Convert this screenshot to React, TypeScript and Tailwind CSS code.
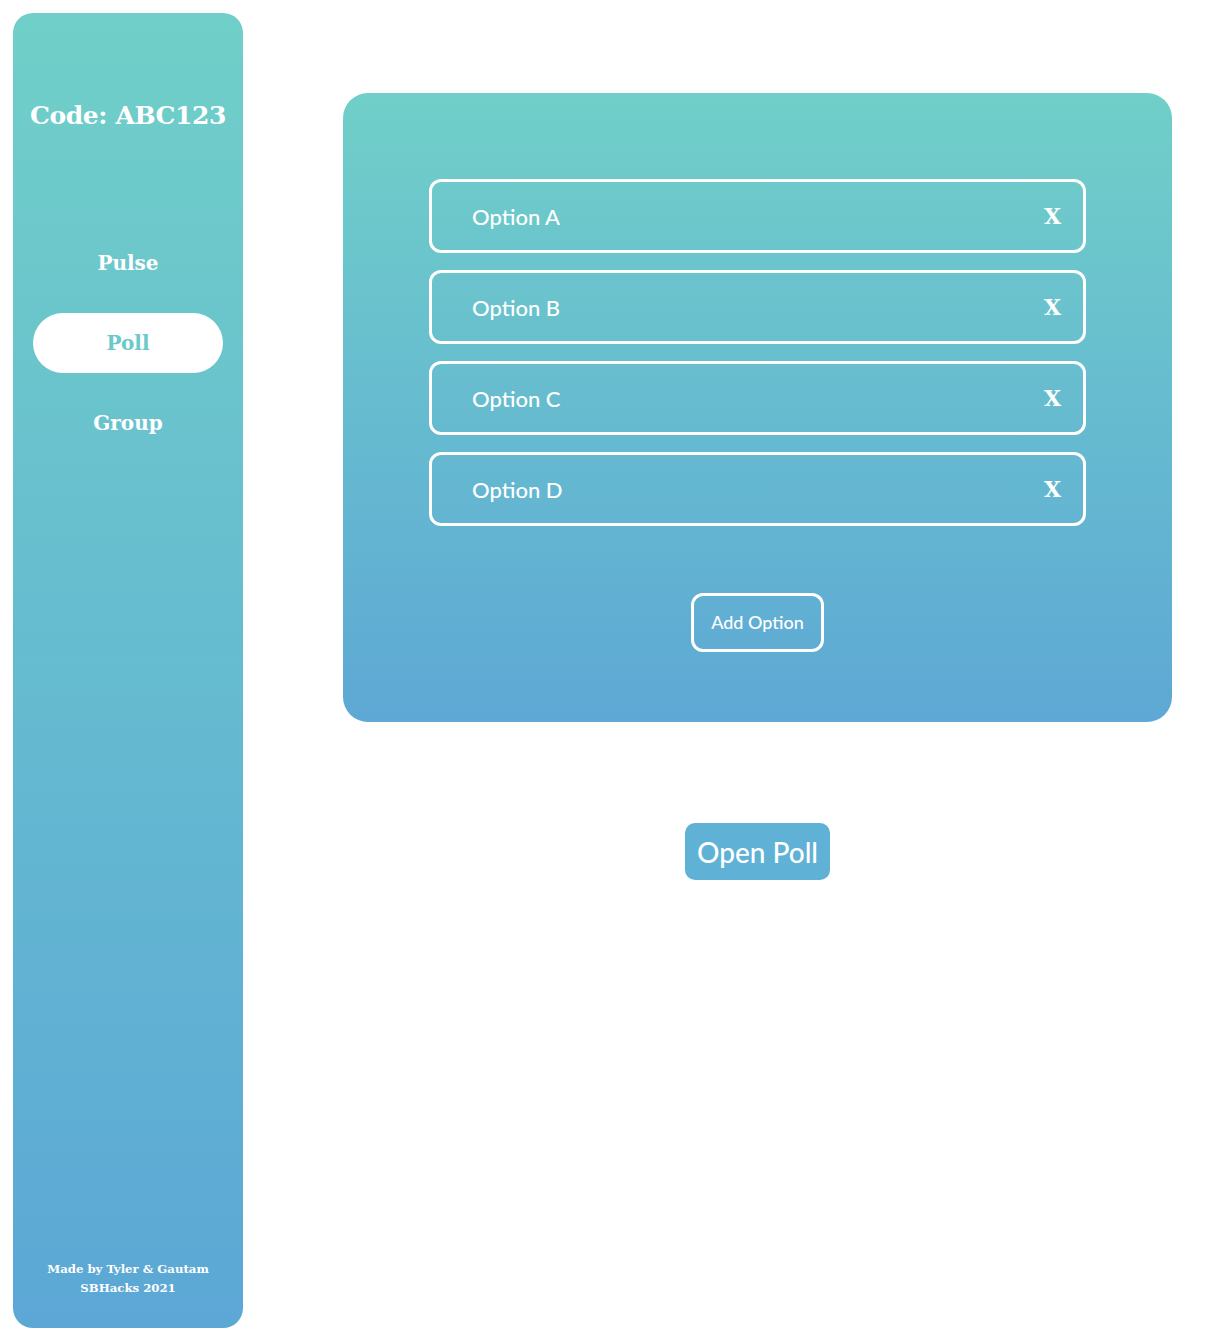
import React, { useState } from 'react';

const slab = { fontFamily: '"DejaVu Serif", "Liberation Serif", serif' };
const sans = { fontFamily: 'Lato, "Open Sans", sans-serif' };

export default function App() {
  const [options, setOptions] = useState(['Option A', 'Option B', 'Option C', 'Option D']);
  const tabs = ['Pulse', 'Poll', 'Group'];

  return (
    <div className="flex min-h-[1338px] w-[1214px] bg-white p-[13px]">
      <aside
        className="flex h-[1315px] w-[230px] shrink-0 flex-col items-center rounded-[20px] bg-gradient-to-b from-[#70cfc8] to-[#5ca7d6] text-white"
        style={slab}
      >
        <h1 className="mt-[83px] text-[25px] font-bold leading-[40px] tracking-[-0.4px]">Code: ABC123</h1>
        <nav className="mt-[97px] flex w-full flex-col items-center gap-[20px] px-[20px]">
          {tabs.map((t) =>
            t === 'Poll' ? (
              <div
                key={t}
                className="flex h-[60px] w-full items-center justify-center rounded-full bg-white text-[20px] font-bold text-[#6cc9c9]"
              >
                {t}
              </div>
            ) : (
              <div key={t} className="flex h-[60px] w-full items-center justify-center text-[20px] font-bold">
                {t}
              </div>
            )
          )}
        </nav>
        <footer className="mt-auto mb-[30px] text-center text-[11.7px] font-bold leading-[19px]">
          <div>Made by Tyler &amp; Gautam</div>
          <div>SBHacks 2021</div>
        </footer>
      </aside>

      <main className="flex flex-1 flex-col items-center pl-[100px] pr-[29px] pt-[80px]">
        <section className="flex w-[829px] flex-col items-center rounded-[25px] bg-gradient-to-b from-[#70cfc8] to-[#5ea8d5] px-[86px] pt-[86px] pb-[70px]">
          <div className="flex w-full flex-col gap-[17px]">
            {options.map((o, i) => (
              <div
                key={i}
                className="flex h-[74px] items-center justify-between rounded-[12px] border-[3px] border-white pl-[40px] pr-[22px] text-white"
              >
                <span className="text-[22px] font-medium" style={sans}>{o}</span>
                <button
                  type="button"
                  onClick={() => setOptions(options.filter((_, j) => j !== i))}
                  className="text-[22px] font-bold"
                  style={slab}
                >
                  X
                </button>
              </div>
            ))}
          </div>
          <button
            type="button"
            onClick={() => setOptions([...options, `Option ${String.fromCharCode(65 + options.length)}`])}
            className="mt-[67px] flex h-[59px] w-[133px] items-center justify-center rounded-[12px] border-[3px] border-white text-[18px] font-medium text-white"
            style={sans}
          >
            Add Option
          </button>
        </section>
        <button
          type="button"
          className="mt-[101px] flex h-[57px] w-[145px] items-center justify-center rounded-[10px] bg-[#5fb1d5] text-[28px] font-medium text-white"
          style={sans}
        >
          Open Poll
        </button>
      </main>
    </div>
  );
}
